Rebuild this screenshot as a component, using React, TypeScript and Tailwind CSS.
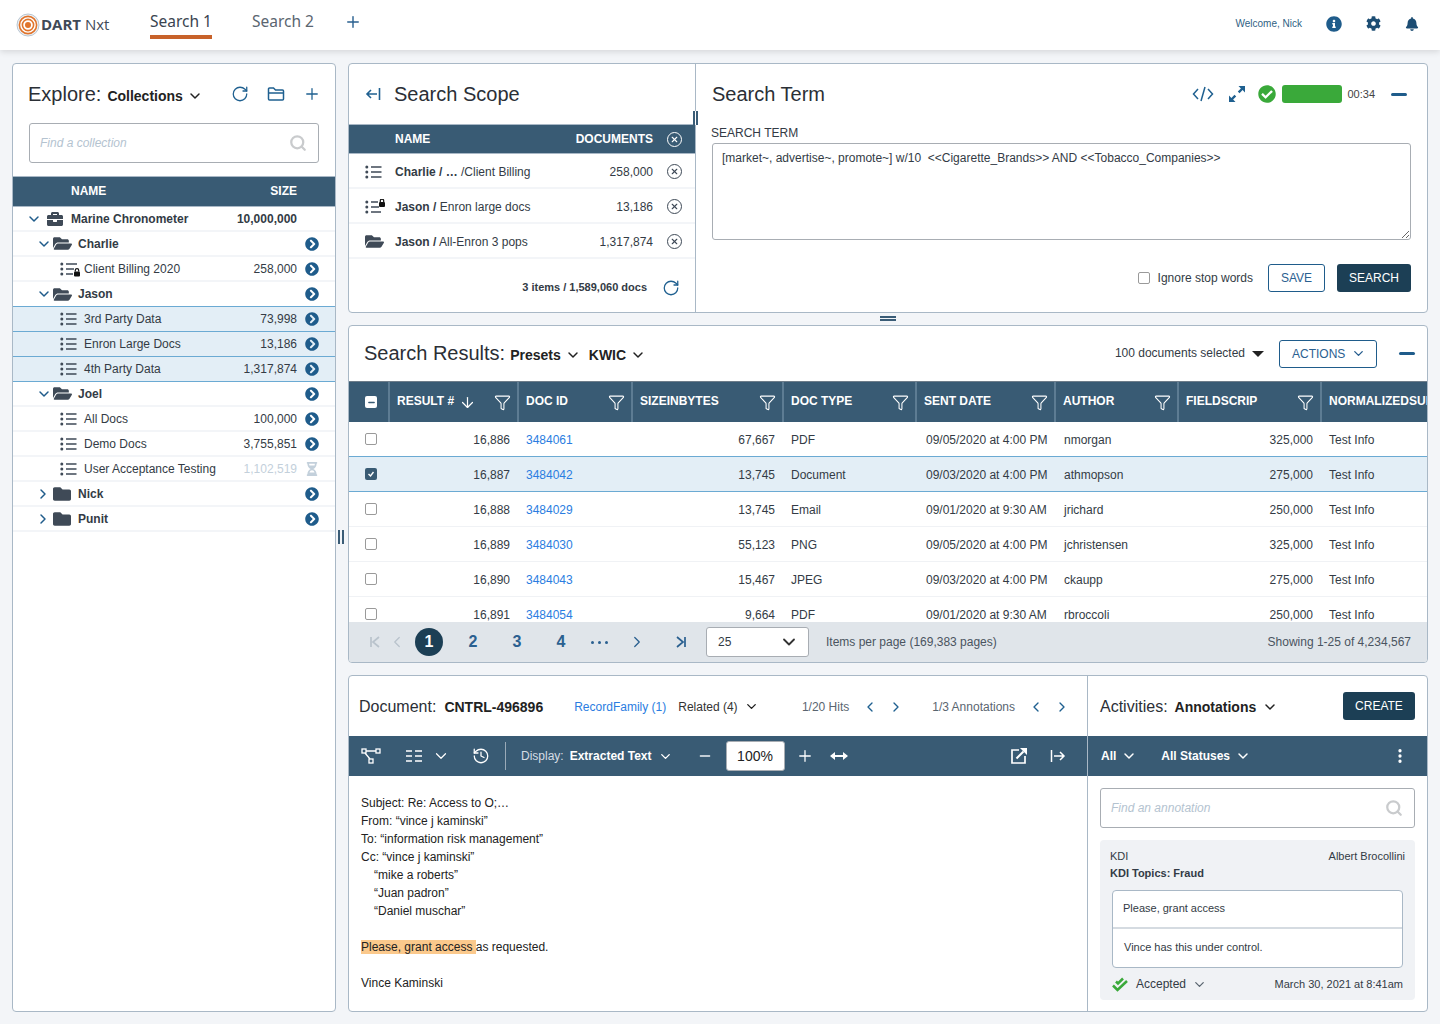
import React from "react";
import { ChevronDown, ChevronRight, ChevronLeft, Plus, RotateCw, Search, X, ArrowDown, Filter, MoreVertical, History, Minus } from "lucide-react";
import { FaBriefcase, FaFolder, FaFolderOpen, FaChevronCircleRight, FaInfoCircle, FaCog, FaBell, FaHourglassHalf, FaCheckCircle } from "react-icons/fa";

const Lines = ({ lock = 0 }: { lock?: 0 | 1 | 2 }) => (
  <svg width="20" height="16" viewBox="0 0 20 16" className="shrink-0 text-[#3f4a57]">
    {[3, 8, 13].map((y) => (
      <circle key={y} cx="1.800" cy={y} r="1.500" fill="currentColor" />
    ))}
    <path d={lock === 1 ? "M6 3h11M6 8h8M6 13h7" : lock === 2 ? "M6 3h7M6 8h8M6 13h10" : "M6 3h10.500M6 8h10.500M6 13h10.500"} stroke="currentColor" strokeWidth="1.700" />
    {lock ? (
      <g>
        <rect x="14" y={lock === 1 ? 10.500 : 3} width="6" height="5" rx="1" fill="#111" />
        <path d={lock === 1 ? "M15.300 10.500V9.300a1.700 1.700 0 0 1 3.400 0v1.200" : "M15.300 3V1.800a1.700 1.700 0 0 1 3.400 0V3"} fill="none" stroke="#111" strokeWidth="1.200" />
      </g>
    ) : null}
  </svg>
);

const Go = () => <FaChevronCircleRight className="text-[#1f5c8b] shrink-0" size={14} />;

const Chev = ({ open }: { open: boolean }) =>
  open ? <ChevronDown size={16} strokeWidth={2.2} className="text-[#1f5c8b]" /> : <ChevronRight size={16} strokeWidth={2.2} className="text-[#1f5c8b] -ml-px mr-px" />;

type Tree = { k: "root" | "open" | "closed" | "leaf" | "lock"; n: string; s?: string; sel?: boolean; wait?: boolean };
const tree: Tree[] = [
  { k: "open", n: "Charlie" },
  { k: "lock", n: "Client Billing 2020", s: "258,000" },
  { k: "open", n: "Jason", sel: true },
  { k: "leaf", n: "3rd Party Data", s: "73,998", sel: true },
  { k: "leaf", n: "Enron Large Docs", s: "13,186", sel: true },
  { k: "leaf", n: "4th Party Data", s: "1,317,874", sel: true },
  { k: "open", n: "Joel" },
  { k: "leaf", n: "All Docs", s: "100,000" },
  { k: "leaf", n: "Demo Docs", s: "3,755,851" },
  { k: "leaf", n: "User Acceptance Testing", s: "1,102,519", wait: true },
  { k: "closed", n: "Nick" },
  { k: "closed", n: "Punit" },
];

const rows = [
  ["16,886", "3484061", "67,667", "PDF", "09/05/2020 at 4:00 PM", "nmorgan", "325,000"],
  ["16,887", "3484042", "13,745", "Document", "09/03/2020 at 4:00 PM", "athmopson", "275,000"],
  ["16,888", "3484029", "13,745", "Email", "09/01/2020 at 9:30 AM", "jrichard", "250,000"],
  ["16,889", "3484030", "55,123", "PNG", "09/05/2020 at 4:00 PM", "jchristensen", "325,000"],
  ["16,890", "3484043", "15,467", "JPEG", "09/03/2020 at 4:00 PM", "ckaupp", "275,000"],
  ["16,891", "3484054", "9,664", "PDF", "09/01/2020 at 9:30 AM", "rbroccoli", "250,000"],
];

const Funnel = () => <Filter size={17} strokeWidth={1.5} className="text-white shrink-0" />;

const Head = ({ t, w, arrow, filter = true }: { t: string; w: string; arrow?: boolean; filter?: boolean }) => (
  <div className={`${w} h-full shrink-0 border-l-2 border-[#5d7c93] pl-[7px] pr-[6px] flex items-center justify-between overflow-hidden`}>
    <span className="flex items-center gap-[5px] whitespace-nowrap -mt-[2px]">
      {t}
      {arrow ? <ArrowDown size={17} strokeWidth={1.7} className="mt-[2px]" /> : null}
    </span>
    {filter ? <Funnel /> : null}
  </div>
);

const CloseC = ({ white }: { white?: boolean }) => (
  <span className={`w-[15px] h-[15px] rounded-full border-[1.5px] flex items-center justify-center shrink-0 ${white ? "border-white text-white" : "border-[#3f4a57] text-[#3f4a57]"}`}>
    <X size={9} strokeWidth={3} />
  </span>
);

const Scope = ({ icon, a, b, c }: { icon: React.ReactNode; a: string; b: string; c: string }) => (
  <div className="h-[35px] flex items-center border-b-2 border-[#f3f5f8] pl-4 pr-[13px] pt-[2px]">
    <span className="w-[30px] shrink-0">{icon}</span>
    <span className="flex-1 whitespace-nowrap">
      <b>{a}</b> {b}
    </span>
    <span className="mr-[14px]">{c}</span>
    <CloseC />
  </div>
);

const Page = ({ t, on }: { t: string; on?: boolean }) =>
  on ? (
    <span className="w-7 h-7 rounded-full bg-[#1c3f55] text-white font-bold text-base flex items-center justify-center">{t}</span>
  ) : (
    <span className="w-7 h-7 text-[#2a6090] font-bold text-base flex items-center justify-center">{t}</span>
  );

const SearchIcon = () => <Search size={18} strokeWidth={3} className="text-[#c9cbcd] shrink-0" />;

export default function App() {
  return (
    <div className="w-[1440px] h-[1024px] overflow-hidden bg-[#f3f5f8] flex flex-col text-xs text-[#333b45] font-['Liberation_Sans',Arial,sans-serif]">
      {/* Top bar */}
      <header className="h-[50px] shrink-0 bg-white shadow-[0_2px_6px_rgba(0,0,0,0.12)] flex items-center pl-4 pr-[21px] relative z-10">
        <svg width="24" height="24" viewBox="0 0 24 24" className="shrink-0">
          <circle cx="12" cy="12" r="11" fill="#eef1f4" stroke="#b9c6d2" strokeWidth="1" />
          <circle cx="12" cy="12" r="8.600" fill="#fff" stroke="#e0742c" strokeWidth="1.600" />
          <circle cx="12" cy="12" r="5.600" fill="#fff" stroke="#e0742c" strokeWidth="1.600" />
          <circle cx="12" cy="12" r="3" fill="#e0742c" />
        </svg>
        <span className="ml-[1px] mb-[3px] text-[15px] text-[#3f4a57] font-['Open_Sans',sans-serif] whitespace-nowrap w-[109px]">
          <b>DART</b> Nxt
        </span>
        <div className="w-[62px] h-[50px] relative flex items-start justify-center pt-[11px] text-[15.500px] text-[#3a4450] font-['Noto_Sans',sans-serif] whitespace-nowrap">
          Search 1
          <span className="absolute left-0 right-0 top-[35px] h-1 bg-[#c8622a]" />
        </div>
        <div className="ml-[40px] h-[50px] pt-[11px] text-[15.500px] text-[#5a6570] font-['Noto_Sans',sans-serif] whitespace-nowrap">Search 2</div>
        <Plus size={18} strokeWidth={1.9} className="ml-[30px] mb-[7px] text-[#2a6090]" />
        <span className="ml-auto mb-[2px] text-[10px] text-[#2f5f83]">Welcome, Nick</span>
        <FaInfoCircle size={16} className="ml-[24px] mb-[3px] text-[#1f5c8b]" />
        <FaCog size={15} className="ml-[24px] mb-[3px] text-[#1c4d73]" />
        <FaBell size={14} className="ml-[24px] mb-[3px] text-[#1c4d73]" />
      </header>

      {/* Body */}
      <div className="flex gap-3 pl-3 pt-[13px] relative">
        {/* Explore */}
        <aside className="w-[324px] h-[949px] shrink-0 bg-white border border-[#a9b8c6] rounded-[4px] flex flex-col">
          <div className="h-[59px] flex items-center pl-[15px] pr-[14px] pt-[1px]">
            <span className="text-[20px] text-[#2b2f36]">Explore:</span>
            <b className="ml-[6px] text-sm text-[#222] mt-[3px]">Collections</b>
            <ChevronDown size={16} strokeWidth={2.2} className="ml-[4px] mt-[4px] text-[#222]" />
            <RotateCw size={18} strokeWidth={1.7} className="ml-auto text-[#1f6090]" />
            <svg width="18" height="16" viewBox="0 0 18 16" fill="none" stroke="#1f6090" strokeWidth="1.500" className="ml-[18px]">
              <path d="M1.500 13V3a1 1 0 0 1 1-1h4l2 2h7a1 1 0 0 1 1 1v8a1 1 0 0 1-1 1h-13a1 1 0 0 1-1-1zM1.500 7h15" />
            </svg>
            <Plus size={18} strokeWidth={1.7} className="ml-[18px] text-[#1f6090]" />
          </div>
          <div className="mx-4 h-10 border border-[#a8adb3] rounded-[3px] flex items-center pl-[10px] pr-[11px]">
            <input placeholder="Find a collection" className="flex-1 min-w-0 outline-none italic text-xs placeholder:text-[#b4c3d0]" />
            <SearchIcon />
          </div>
          <div className="mt-[13px] h-[31px] bg-[#395b74] border-y border-[#a9b8c6] text-white font-bold flex items-center pb-[2px]">
            <span className="ml-[58px]">NAME</span>
            <span className="ml-auto mr-[38px]">SIZE</span>
          </div>
          <div className="h-[25px] flex items-center border-b-2 border-[#f3f5f8] pl-[13px] pr-[38px]">
            <Chev open />
            <FaBriefcase size={16} className="ml-[5px] text-[#3f4a57]" />
            <b className="ml-[8px] text-[#333b45]">Marine Chronometer</b>
            <b className="ml-auto">10,000,000</b>
          </div>
          {tree.map((r) => {
            const folder = r.k === "open" || r.k === "closed";
            return (
              <div
                key={r.n}
                className={`h-[25px] flex items-center border-b pr-4 ${r.sel ? "border-[#6baad3]" : "border-[#f3f5f8] border-b-2"} ${r.sel && !folder ? "bg-[#e3eef6]" : "bg-white"} ${folder ? "pl-[23px]" : "pl-[47px]"}`}
              >
                {folder ? (
                  <>
                    <Chev open={r.k === "open"} />
                    {r.k === "open" ? <FaFolderOpen size={19} className="ml-[1px] text-[#3f4a57]" /> : <FaFolder size={18} className="ml-[1px] mr-[1px] text-[#3f4a57]" />}
                    <b className="ml-[6px]">{r.n}</b>
                  </>
                ) : (
                  <>
                    {r.k === "lock" ? <Lines lock={1} /> : <Lines />}
                    <span className="ml-[4px]">{r.n}</span>
                  </>
                )}
                {r.s ? <span className={`ml-auto ${r.wait ? "text-[#c3d0db]" : ""}`}>{r.s}</span> : null}
                {r.wait ? (
                  <FaHourglassHalf size={14} className="ml-2 text-[#c3d0db]" />
                ) : (
                  <span className={r.s ? "ml-2" : "ml-auto"}>
                    <Go />
                  </span>
                )}
              </div>
            );
          })}
        </aside>
        <span className="absolute left-[338px] top-[480px] w-[6px] h-[14px] border-x-2 border-[#3a5c76]" />

        {/* Right column */}
        <main className="w-[1080px] shrink-0 flex flex-col gap-3 relative">
          <span className="absolute left-[532px] top-[253px] w-4 h-[5px] border-y-2 border-[#3a5c76]" />
          {/* Top row */}
          <section className="h-[250px] bg-white border border-[#a9b8c6] rounded-[4px] flex relative">
            <span className="absolute left-[344px] top-[47px] w-[5px] h-[14px] border-x-2 border-[#3a5c76] bg-white" />
            <div className="w-[347px] shrink-0 border-r border-[#a9b8c6] flex flex-col">
              <div className="h-[60px] flex items-center pl-4">
                <svg width="16" height="14" viewBox="0 0 16 14" fill="none" stroke="#1f6090" strokeWidth="1.600" className="shrink-0">
                  <path d="M14.500 1v12M12 7H2M6 3 2 7l4 4" />
                </svg>
                <span className="ml-[13px] text-[20px] text-[#2b2f36]">Search Scope</span>
              </div>
              <div className="h-[30px] bg-[#395b74] border-y border-[#a9b8c6] text-white font-bold flex items-center pl-[46px] pr-[13px]">
                <span>NAME</span>
                <span className="ml-auto mr-[14px]">DOCUMENTS</span>
                <CloseC white />
              </div>
              <Scope icon={<Lines />} a="Charlie / …" b="/Client Billing" c="258,000" />
              <Scope icon={<Lines lock={2} />} a="Jason /" b="Enron large docs" c="13,186" />
              <Scope icon={<FaFolderOpen size={19} className="text-[#3f4a57]" />} a="Jason /" b="All-Enron 3 pops" c="1,317,874" />
              <div className="flex-1 flex items-center justify-end pr-[15px] pt-[4px] text-[11px] font-bold">
                <span>3 items / 1,589,060 docs</span>
                <RotateCw size={18} strokeWidth={1.7} className="ml-[15px] text-[#1f6090]" />
              </div>
            </div>
            <div className="flex-1 min-w-0 flex flex-col pl-[16px] pr-4">
              <div className="h-[60px] flex items-center">
                <span className="text-[20px] text-[#2b2f36]">Search Term</span>
                <svg width="22" height="16" viewBox="0 0 22 16" fill="none" stroke="#1f6090" strokeWidth="1.500" className="ml-auto">
                  <path d="M6 3 1.500 8 6 13M16 3l4.500 5L16 13M13 1 9 15" />
                </svg>
                <svg width="16" height="16" viewBox="0 0 16 16" className="ml-[15px] text-[#1f6090]" fill="currentColor">
                  <path d="M9.500 0H16v6.500L13.600 4.100 10.500 7.200 8.800 5.500 11.900 2.400zM6.500 16H0V9.500l2.400 2.400 3.100-3.100 1.700 1.700-3.100 3.100z" />
                </svg>
                <FaCheckCircle size={18} className="ml-[13px] text-[#3aa93a]" />
                <span className="ml-[6px] w-[60px] h-[18px] bg-[#3aa93a] rounded-[3px]" />
                <span className="ml-[5px] text-[11px] text-[#444]">00:34</span>
                <span className="ml-[16px] mr-[4px] w-4 h-[3px] rounded bg-[#1f5c8b]" />
              </div>
              <label className="-ml-px mt-[2px] leading-[14px]">SEARCH TERM</label>
              <textarea
                className="mt-[3px] h-[97px] w-full border border-[#a8adb3] rounded-[3px] px-[9px] py-[7px] outline-none leading-[14px] text-[#333b45] text-xs"
                defaultValue="[market~, advertise~, promote~] w/10  <<Cigarette_Brands>> AND <<Tobacco_Companies>>"
              />
              <div className="mt-6 flex items-center justify-end">
                <span className="w-3 h-3 rounded-[2px] border border-[#9a9a9a]" />
                <span className="ml-2">Ignore stop words</span>
                <button className="ml-[15px] w-[57px] h-7 border border-[#1f5c8b] rounded-[3px] text-[#2a6090]">SAVE</button>
                <button className="ml-3 w-[74px] h-7 bg-[#1c3f55] rounded-[3px] text-white">SEARCH</button>
              </div>
            </div>
          </section>

          {/* Results */}
          <section className="h-[338px] bg-white border border-[#a9b8c6] rounded-[4px] flex flex-col overflow-hidden">
            <div className="h-[55px] shrink-0 flex items-center pl-[15px] pr-3">
              <span className="text-[20px] text-[#2b2f36]">Search Results:</span>
              <b className="ml-[5px] text-sm text-[#222] mt-[3px]">Presets</b>
              <ChevronDown size={16} strokeWidth={2.2} className="ml-[4px] mt-[3px] text-[#222]" />
              <b className="ml-[8px] text-sm text-[#222] mt-[3px]">KWIC</b>
              <ChevronDown size={16} strokeWidth={2.2} className="ml-[4px] mt-[3px] text-[#222]" />
              <span className="ml-auto -mt-[2px]">100 documents selected</span>
              <span className="ml-[7px] w-0 h-0 border-x-[6px] border-x-transparent border-t-[6px] border-t-[#222]" />
              <button className="ml-[15px] w-[98px] h-7 border border-[#1f5c8b] rounded-[3px] text-[#2a6090] flex items-center pl-3 gap-[6px]">
                ACTIONS <ChevronDown size={15} strokeWidth={2.2} />
              </button>
              <span className="ml-[22px] w-4 h-[3px] rounded bg-[#1f5c8b]" />
            </div>
            <div className="h-[41px] shrink-0 bg-[#395b74] border-t border-[#6e7d8a] text-[#fff] font-bold flex items-center">
              <div className="w-[39px] shrink-0 flex pl-4">
                <span className="w-[12px] h-[12px] rounded-[2px] bg-white flex items-center justify-center">
                  <Minus size={9} strokeWidth={4} className="text-[#395b74]" />
                </span>
              </div>
              <Head t="RESULT #" arrow w="w-[129px]" />
              <Head t="DOC ID" w="w-[114px]" />
              <Head t="SIZEINBYTES" w="w-[151px]" />
              <Head t="DOC TYPE" w="w-[133px]" />
              <Head t="SENT DATE" w="w-[139px]" />
              <Head t="AUTHOR" w="w-[123px]" />
              <Head t="FIELDSCRIP" w="w-[143px]" />
              <Head t="NORMALIZEDSUBJECT" filter={false} w="w-[107px]" />
            </div>
            <div className="flex-1 min-h-0 overflow-hidden">
              {rows.map((r, i) => (
                <div key={r[1]} className={`h-[35px] flex items-center border-b pt-[2px] ${i < 2 ? "border-[#6baad3]" : "border-[#f0f2f5]"} ${i === 1 ? "bg-[#e3eef6]" : ""}`}>
                  <div className="w-[39px] shrink-0 flex pl-4 -mt-[3px]">
                    {i === 1 ? (
                      <span className="w-3 h-3 rounded-[2px] bg-[#395b74] flex items-center justify-center">
                        <svg width="8" height="8" viewBox="0 0 8 8" fill="none" stroke="#fff" strokeWidth="1.400">
                          <path d="m1.500 4 2 2 3-4" />
                        </svg>
                      </span>
                    ) : (
                      <span className="w-3 h-3 rounded-[2px] border border-[#9a9a9a] bg-white" />
                    )}
                  </div>
                  <div className="w-[129px] shrink-0 text-right pr-[7px]">{r[0]}</div>
                  <div className="w-[114px] shrink-0 pl-[9px] text-[#2a7de1]">{r[1]}</div>
                  <div className="w-[151px] shrink-0 text-right pr-[7px]">{r[2]}</div>
                  <div className="w-[133px] shrink-0 pl-[9px]">{r[3]}</div>
                  <div className="w-[139px] shrink-0 pl-[11px] whitespace-nowrap">{r[4]}</div>
                  <div className="w-[123px] shrink-0 pl-[10px]">{r[5]}</div>
                  <div className="w-[143px] shrink-0 text-right pr-[7px]">{r[6]}</div>
                  <div className="flex-1 pl-[9px]">Test Info</div>
                </div>
              ))}
            </div>
            <div className="h-10 shrink-0 bg-[#e0e5ea] flex items-center pl-[19px] pr-4">
              <svg width="14" height="14" viewBox="0 0 14 14" fill="none" stroke="#b9c3cc" strokeWidth="1.700">
                <path d="M3 2v10M11 2 5 7l6 5" />
              </svg>
              <ChevronLeft size={18} strokeWidth={1.700} className="ml-[6px] text-[#b9c3cc]" />
              <span className="ml-[9px]"><Page t="1" on /></span>
              <span className="ml-4"><Page t="2" /></span>
              <span className="ml-4"><Page t="3" /></span>
              <span className="ml-4"><Page t="4" /></span>
              <span className="ml-[16px] flex gap-[4px]">
                <i className="w-[3px] h-[3px] rounded-full bg-[#2a6090]" />
                <i className="w-[3px] h-[3px] rounded-full bg-[#2a6090]" />
                <i className="w-[3px] h-[3px] rounded-full bg-[#2a6090]" />
              </span>
              <ChevronRight size={18} strokeWidth={1.700} className="ml-[20px] text-[#2a6090]" />
              <svg width="14" height="14" viewBox="0 0 14 14" fill="none" stroke="#2a6090" strokeWidth="1.700" className="ml-[28px]">
                <path d="M11 2v10M3 2l6 5-6 5" />
              </svg>
              <div className="ml-[18px] w-[103px] h-[30px] bg-white border border-[#a8adb3] rounded-[3px] flex items-center justify-between pl-[11px] pr-[9px]">
                25 <ChevronDown size={20} strokeWidth={2.2} className="text-[#333]" />
              </div>
              <span className="ml-[17px] text-[#4a5460]">Items per page (169,383 pages)</span>
              <span className="ml-auto text-[#4a5460]">Showing 1-25 of 4,234,567</span>
            </div>
          </section>

          {/* Document */}
          <section className="h-[337px] bg-white border border-[#a9b8c6] rounded-[4px] flex overflow-hidden">
            <div className="w-[739px] shrink-0 border-r border-[#a9b8c6] flex flex-col">
              <div className="h-[60px] shrink-0 flex items-center pl-[10px] pr-[17px] pt-[1px]">
                <span className="text-base text-[#2b2f36]">Document:</span>
                <b className="ml-2 text-sm text-[#222]">CNTRL-496896</b>
                <span className="ml-[31px] text-[#2a7de1]">RecordFamily (1)</span>
                <span className="ml-3 text-[#333]">Related (4)</span>
                <ChevronDown size={15} strokeWidth={2.2} className="ml-[6px] text-[#222]" />
                <span className="ml-auto text-[#5a6570]">1/20 Hits</span>
                <ChevronLeft size={16} strokeWidth={2} className="ml-[13px] text-[#1f6090]" />
                <ChevronRight size={16} strokeWidth={2} className="ml-[10px] text-[#1f6090]" />
                <span className="ml-[28px] text-[#5a6570]">1/3 Annotations</span>
                <ChevronLeft size={16} strokeWidth={2} className="ml-[13px] text-[#1f6090]" />
                <ChevronRight size={16} strokeWidth={2} className="ml-[10px] text-[#1f6090]" />
              </div>
              <div className="h-10 shrink-0 bg-[#395b74] text-white flex items-center pl-3 pr-[21px]">
                <svg width="20" height="16" viewBox="0 0 20 16" fill="none" stroke="#fff" strokeWidth="1.300">
                  <rect x="1" y="1" width="4" height="4" />
                  <rect x="15" y="1" width="4" height="4" />
                  <rect x="8" y="11" width="4" height="4" />
                  <path d="M5 3h10M4 5l5 6" />
                </svg>
                <svg width="16" height="14" viewBox="0 0 16 14" stroke="#fff" strokeWidth="1.500" className="ml-[25px]">
                  <path d="M0 2h6M0 7h6M0 12h6M9 2h7M9 7h7M9 12h7" />
                </svg>
                <ChevronDown size={18} strokeWidth={1.600} className="ml-[10px]" />
                <History size={18} strokeWidth={1.700} className="ml-[22px]" />
                <span className="ml-[15px] w-[1px] h-7 bg-[#9aaab8]" />
                <span className="ml-[15px] text-[#d5dde4]">Display:</span>
                <b className="ml-[6px]">Extracted Text</b>
                <ChevronDown size={15} strokeWidth={2.2} className="ml-[6px]" />
                <Minus size={16} strokeWidth={1.900} className="ml-[24px] text-[#eef2f5]" />
                <span className="ml-[13px] w-[59px] h-[30px] bg-white rounded-[3px] border border-[#a8adb3] text-sm text-[#222] flex items-center justify-center">100%</span>
                <Plus size={18} strokeWidth={1.700} className="ml-[11px]" />
                <svg width="18" height="10" viewBox="0 0 18 10" fill="#fff" className="ml-[16px]">
                  <path d="M0 5l5-4v3h8V1l5 4-5 4V6H5v3z" />
                </svg>
                <svg width="18" height="18" viewBox="0 0 18 18" fill="none" stroke="#fff" strokeWidth="1.700" className="ml-auto">
                  <path d="M9 3H2v13h13V9" />
                  <path d="M6.500 11.500 13.500 4.500" strokeWidth="2" />
                  <path d="M10 1h7v7z" fill="#fff" stroke="none" />
                </svg>
                <svg width="16" height="14" viewBox="0 0 16 14" fill="none" stroke="#fff" strokeWidth="1.500" className="ml-[22px]">
                  <path d="M1.500 1v12M4 7h10M10 3l4 4-4 4" />
                </svg>
              </div>
              <div className="pt-[18px] pl-3 leading-[18px] text-[#222]">
                <div>Subject: Re: Access to O;…</div>
                <div>From: “vince j kaminski”</div>
                <div>To: “information risk management”</div>
                <div>Cc: “vince j kaminski”</div>
                <div className="pl-[13px]">“mike a roberts”</div>
                <div className="pl-[13px]">“Juan padron”</div>
                <div className="pl-[13px]">“Daniel muschar”</div>
                <div className="mt-[18px]">
                  <span className="bg-[#fbc98c]">Please, grant access </span>as requested.
                </div>
                <div className="mt-[18px]">Vince Kaminski</div>
              </div>
            </div>
            <div className="flex-1 min-w-0 flex flex-col">
              <div className="h-[60px] shrink-0 flex items-center pl-3 pr-3">
                <span className="text-base text-[#2b2f36] mt-[1px]">Activities:</span>
                <b className="ml-[7px] text-sm text-[#222] mt-[1px]">Annotations</b>
                <ChevronDown size={16} strokeWidth={2.2} className="ml-[6px] mt-[1px] text-[#222]" />
                <button className="ml-auto w-[72px] h-7 bg-[#1c3f55] rounded-[3px] text-white">CREATE</button>
              </div>
              <div className="h-10 shrink-0 bg-[#395b74] text-white font-bold flex items-center pl-[13px] pr-[18px]">
                All
                <ChevronDown size={16} strokeWidth={2.2} className="ml-[5px]" />
                <span className="ml-[24px]">All Statuses</span>
                <ChevronDown size={16} strokeWidth={2.2} className="ml-[5px]" />
                <MoreVertical size={18} strokeWidth={2.4} className="ml-auto" />
              </div>
              <div className="mt-3 mx-3 h-10 shrink-0 border border-[#a8adb3] rounded-[3px] flex items-center pl-[10px] pr-[11px]">
                <input placeholder="Find an annotation" className="flex-1 min-w-0 outline-none italic text-xs placeholder:text-[#b4c3d0]" />
                <SearchIcon />
              </div>
              <div className="mt-3 mx-3 h-40 shrink-0 bg-[#f0f2f5] rounded-[4px] px-[10px] pt-[9px] text-[11px]">
                <div className="flex justify-between leading-[15px]">
                  <span>KDI</span>
                  <span>Albert Brocollini</span>
                </div>
                <div className="font-bold leading-[15px] mt-[2px]">KDI Topics: Fraud</div>
                <div className="mt-[9px] mx-[2px] h-[78px] bg-white border border-[#a9b8c6] rounded-[4px] text-[11px]">
                  <div className="h-[38px] pl-[10px] flex items-center border-b-2 border-[#d5dbe1] pb-[2px]">Please, grant access</div>
                  <div className="h-[37px] pl-[11px] flex items-center">Vince has this under control.</div>
                </div>
                <div className="mt-2 mx-[2px] flex items-center text-[12px]">
                  <svg width="16" height="16" viewBox="0 0 16 16" fill="none" stroke="#3aa93a" strokeWidth="2.500">
                    <path d="M1 9.500 5.500 14 15 5M4 5.500 6 7.500 11 2.500" />
                  </svg>
                  <span className="ml-2">Accepted</span>
                  <ChevronDown size={15} strokeWidth={2} className="ml-[6px] text-[#5a6570]" />
                  <span className="ml-auto text-[11px]">March 30, 2021 at 8:41am</span>
                </div>
              </div>
            </div>
          </section>
        </main>
      </div>
    </div>
  );
}
